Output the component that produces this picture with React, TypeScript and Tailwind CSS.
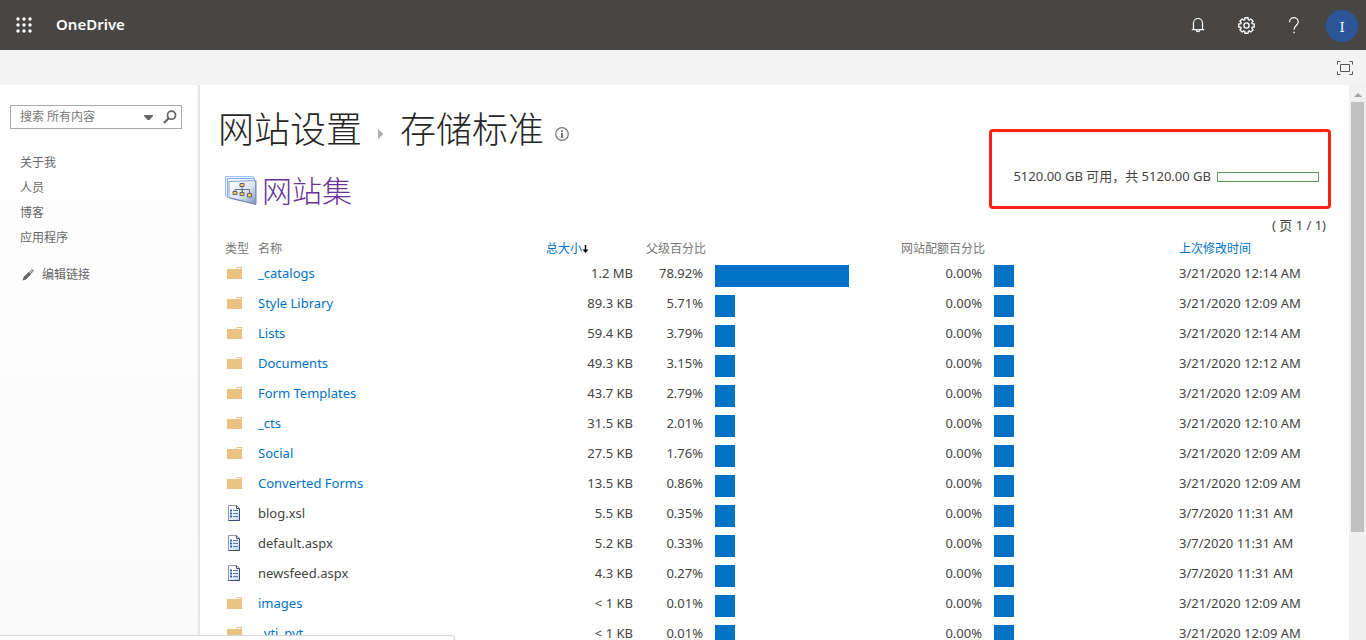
import React from 'react';

type Row = {
  kind: 'folder' | 'file';
  name: string;
  size: string;
  parent: number;
  modified: string;
};

const rows: Row[] = [
  { kind: 'folder', name: '_catalogs', size: '1.2 MB', parent: 78.92, modified: '3/21/2020 12:14 AM' },
  { kind: 'folder', name: 'Style Library', size: '89.3 KB', parent: 5.71, modified: '3/21/2020 12:09 AM' },
  { kind: 'folder', name: 'Lists', size: '59.4 KB', parent: 3.79, modified: '3/21/2020 12:14 AM' },
  { kind: 'folder', name: 'Documents', size: '49.3 KB', parent: 3.15, modified: '3/21/2020 12:12 AM' },
  { kind: 'folder', name: 'Form Templates', size: '43.7 KB', parent: 2.79, modified: '3/21/2020 12:09 AM' },
  { kind: 'folder', name: '_cts', size: '31.5 KB', parent: 2.01, modified: '3/21/2020 12:10 AM' },
  { kind: 'folder', name: 'Social', size: '27.5 KB', parent: 1.76, modified: '3/21/2020 12:09 AM' },
  { kind: 'folder', name: 'Converted Forms', size: '13.5 KB', parent: 0.86, modified: '3/21/2020 12:09 AM' },
  { kind: 'file', name: 'blog.xsl', size: '5.5 KB', parent: 0.35, modified: '3/7/2020 11:31 AM' },
  { kind: 'file', name: 'default.aspx', size: '5.2 KB', parent: 0.33, modified: '3/7/2020 11:31 AM' },
  { kind: 'file', name: 'newsfeed.aspx', size: '4.3 KB', parent: 0.27, modified: '3/7/2020 11:31 AM' },
  { kind: 'folder', name: 'images', size: '< 1 KB', parent: 0.01, modified: '3/21/2020 12:09 AM' },
  { kind: 'folder', name: '_vti_pvt', size: '< 1 KB', parent: 0.01, modified: '3/21/2020 12:09 AM' },
];

const navLinks = ['关于我', '人员', '博客', '应用程序'];

function WaffleIcon() {
  return (
    <svg width="16" height="16" viewBox="0 0 16 16" fill="#fff" aria-hidden="true">
      {[2, 8, 14].map((y) => [2, 8, 14].map((x) => <circle key={`${x}-${y}`} cx={x} cy={y} r="1.7" />))}
    </svg>
  );
}

function BellIcon() {
  return (
    <svg width="14" height="16" viewBox="0 0 14 16" fill="none" stroke="#fff" strokeWidth="1.2" aria-hidden="true">
      <path d="M2.5 12.5V6a4.5 4.5 0 0 1 9 0v6.5M.8 12.6h12.4M5.3 13a1.7 1.7 0 0 0 3.4 0" />
    </svg>
  );
}

function GearIcon() {
  const teeth = [0, 45, 90, 135, 180, 225, 270, 315];
  const points = teeth
    .map((a) =>
      [
        [-17, 6],
        [-12, 7.9],
        [12, 7.9],
        [17, 6],
      ]
        .map(([d, r]) => {
          const t = ((a + d) * Math.PI) / 180;
          return `${(8.5 + r * Math.cos(t)).toFixed(2)},${(8.5 + r * Math.sin(t)).toFixed(2)}`;
        })
        .join(' '),
    )
    .join(' ');
  return (
    <svg width="17" height="17" viewBox="0 0 17 17" fill="none" stroke="#fff" strokeWidth="1.3" strokeLinejoin="round" aria-hidden="true">
      <polygon points={points} />
      <circle cx="8.5" cy="8.5" r="2.6" />
    </svg>
  );
}

function HelpIcon() {
  return (
    <svg width="12" height="17" viewBox="0 0 12 17" fill="none" stroke="#fff" strokeWidth="1.2" aria-hidden="true">
      <path d="M1.6 5.2V5a4.3 4.3 0 0 1 8.6 0c0 1.8-1 2.7-2.2 3.8C6.8 9.9 6 10.7 6 12.8" />
      <path d="M5.3 15.5h1.4" strokeWidth="1.5" />
    </svg>
  );
}

function FocusIcon() {
  return (
    <svg width="16" height="14" viewBox="0 0 16 14" fill="none" stroke="#555" aria-hidden="true">
      <path d="M.5 3.5v-3h3M12.5.5h3v3M15.5 10.5v3h-3M3.5 13.5h-3v-3M3.5 3.5h9v7h-9z" />
    </svg>
  );
}

function SearchIcon() {
  return (
    <svg width="14" height="14" viewBox="0 0 14 14" fill="none" stroke="#666" aria-hidden="true">
      <circle cx="8.5" cy="5.2" r="4" strokeWidth="1.8" />
      <path d="M5.6 8.3 1 13" strokeWidth="2.2" />
    </svg>
  );
}

function PencilIcon() {
  return (
    <svg width="12" height="12" viewBox="0 0 12 12" fill="#666" aria-hidden="true">
      <path d="M.5 11.5 1.6 8 7 2.7l2.3 2.3L4 10.4zM7.6 2.1l.7-.7 2.3 2.3-.7.7zM8.9 1C9.6.2 10.3.1 11 .9c.8.7.7 1.5 0 2.2z" />
    </svg>
  );
}

function InfoIcon() {
  return (
    <svg width="14" height="14" viewBox="0 0 14 14" fill="none" aria-hidden="true">
      <circle cx="7" cy="7" r="6.3" stroke="#777" strokeWidth="1.2" />
      <path d="M7 6v4.600M7 3.200v1.700" stroke="#666" strokeWidth="1.800" />
      <path d="M5.800 6.300h1M5.500 10.300h3" stroke="#777" strokeWidth=".8" />
    </svg>
  );
}

function SiteCollectionIcon() {
  return (
    <svg width="32" height="31" viewBox="0 0 32 31" aria-hidden="true">
      <defs>
        <linearGradient id="pane" x1="0" y1="0" x2="1" y2="1">
          <stop offset="0" stopColor="#fff" />
          <stop offset=".55" stopColor="#dce4f0" />
          <stop offset="1" stopColor="#7f93bb" />
        </linearGradient>
      </defs>
      <path d="M.5 1.5h28v20L.5 21z" fill="#e9f3ff" stroke="#9fc3f2" />
      <path d="M2.5 3.5h27v20l-27-1z" fill="#f3f8ff" stroke="#86adec" />
      <path d="M4 6.5 30.5 5.5v23.5L4 22.5z" fill="url(#pane)" stroke="#8aa2d0" />
      <path d="M31 5.5V29.5L5 23.2" fill="none" stroke="#7688ad" />
      <path d="M17 11.5v5M10 18.5v-4h14.5v5M17.5 15v4" fill="none" stroke="#6b7280" />
      <g fill="#ffc75a" stroke="#5d6470">
        <path d="M15 8.5h4v3h-4zM8 16.5h4v3H8zM15 17.5h4v3h-4zM22.5 18.5h4v3.500h-4z" />
      </g>
    </svg>
  );
}

function FolderIcon() {
  return (
    <svg width="16" height="14" viewBox="0 0 16 14" aria-hidden="true">
      <path d="M0 3h8.500L10 1h5v12H0z" fill="#eac282" />
      <path d="M9.500 2.500H14" stroke="#fff" />
    </svg>
  );
}

function FileIcon() {
  return (
    <svg width="14" height="16" viewBox="0 0 14 16" aria-hidden="true">
      <defs>
        <linearGradient id="sheet" x1="0" y1="0" x2="1" y2="1">
          <stop offset=".3" stopColor="#fff" />
          <stop offset="1" stopColor="#b9cdf5" />
        </linearGradient>
      </defs>
      <path d="M1.500.5h8l3 3v12h-11z" fill="url(#sheet)" stroke="#8b95aa" />
      <path d="M9.500.5v3h3v12h-11" fill="none" stroke="#3a4f78" />
      <path d="M3 5.500h2M3 8.500h2M3 11.500h2" stroke="#2467d1" strokeWidth="1.800" />
      <path d="M6 5.500h5M6 8.500h5M6 11.500h5" stroke="#65779e" />
    </svg>
  );
}

function SortArrow() {
  return (
    <svg width="7" height="10" viewBox="0 0 7 10" aria-hidden="true">
      <path d="M3.500 1v6" stroke="#000" strokeWidth="1.400" />
      <path d="M.5 5.500h6l-3 3.500z" fill="#000" />
    </svg>
  );
}

function Bar({ percent }: { percent: number }) {
  return <div className="h-[22px] bg-[#0072c6]" style={{ width: Math.max(20, Math.round(percent * 1.7)) }} />;
}

export default function App() {
  return (
    <div className="relative flex h-screen flex-col overflow-hidden bg-white font-['Noto_Sans','Noto_Sans_CJK_SC',sans-serif] text-[13px] text-[#444]">
      <header className="flex h-[50px] shrink-0 items-center bg-[#484644] pr-2 text-white">
        <button aria-label="应用启动器" className="flex h-full w-12 items-center justify-center">
          <WaffleIcon />
        </button>
        <a href="#" className="ml-2 pb-[2px] text-[15px] font-semibold">OneDrive</a>
        <div className="ml-auto flex h-full items-center">
          <button aria-label="通知" className="flex h-full w-12 items-center justify-center"><BellIcon /></button>
          <button aria-label="设置" className="flex h-full w-12 items-center justify-center"><GearIcon /></button>
          <button aria-label="帮助" className="flex h-full w-12 items-center justify-center"><HelpIcon /></button>
          <button aria-label="帐户" className="mt-[2px] ml-2 flex size-8 items-center justify-center rounded-full bg-[#2b579a] text-[14px]">I</button>
        </div>
      </header>

      <div className="flex h-[35px] shrink-0 items-center justify-end bg-[#f3f3f3] pr-[13px]">
        <button aria-label="聚焦内容"><FocusIcon /></button>
      </div>

      <div className="flex min-h-0 flex-1">
        <aside className="flex w-[197px] shrink-0 flex-col bg-linear-to-b from-white to-[#fafafa] pt-5 text-[12px] text-[#666]">
          <form className="mr-[15px] ml-[10px] flex h-6 items-center border border-[#ababab] bg-white pr-1" onSubmit={(e) => e.preventDefault()}>
            <input
              type="text"
              aria-label="搜索"
              placeholder="搜索 所有内容"
              className="min-w-0 flex-1 pl-[9px] outline-none placeholder:text-[#777]"
            />
            <button type="button" aria-label="搜索范围" className="mr-[10px]">
              <svg width="9" height="5" viewBox="0 0 9 5" aria-hidden="true"><path d="M0 0h9v1L5.500 5h-2L0 1z" fill="#666" /></svg>
            </button>
            <button type="submit" aria-label="开始搜索"><SearchIcon /></button>
          </form>
          <nav className="mt-[21px] flex flex-col pl-5">
            {navLinks.map((label) => (
              <a key={label} href="#" className="h-[25px] leading-[25px]">{label}</a>
            ))}
            <a href="#" className="mt-3 flex h-[25px] items-center gap-2 pl-[2px]">
              <PencilIcon />
              编辑链接
            </a>
          </nav>
        </aside>
        <div className="w-[3px] shrink-0 bg-linear-to-r from-[#f8f8f8] to-[#dedede]" />

        <main className="min-w-0 flex-1 overflow-hidden pt-5 pr-[18px] pl-[18px]">
          <div className="flex items-start justify-between">
            <div>
              <h1 className="flex h-[50px] items-center text-[36px] font-light text-[#262626]">
                <a href="#">网站设置</a>
                <svg className="mt-2 mr-4 ml-4" width="6" height="10" viewBox="0 0 6 10" aria-hidden="true"><path d="M0 0l5.500 5L0 10z" fill="#aaa" /></svg>
                <span>存储标准</span>
                <button aria-label="说明" className="mt-2 ml-[11px]"><InfoIcon /></button>
              </h1>
              <h2 className="mt-[14px] flex h-[42px] items-center gap-[5px] pl-[7px] text-[30px] font-light text-[#663399]">
                <SiteCollectionIcon />
                <a href="#">网站集</a>
              </h2>
            </div>
            <div className="mt-6 flex h-20 w-[342px] items-center justify-end gap-[6px] rounded-[4px] border-3 border-[#ff2116] pt-4 pr-[9px] whitespace-nowrap">
              <span>5120.00 GB 可用，共 5120.00 GB</span>
              <div className="h-[10px] w-[102px] border border-[#5b9a5b]" />
            </div>
          </div>
          <p className="mt-1 h-5 pr-[5px] text-right leading-5">( 页 1 / 1)</p>

          <div className="mt-1 pl-[7px]">
            <table className="w-full table-fixed border-collapse whitespace-nowrap">
              <colgroup>
                <col className="w-[33px]" />
                <col />
                <col className="w-[90px]" />
                <col className="w-[70px]" />
                <col className="w-[195px]" />
                <col className="w-[84px]" />
                <col className="w-[194px]" />
                <col className="w-[152px]" />
              </colgroup>
              <thead>
                <tr className="h-[19px] text-left text-[12px] leading-[18px] text-[#777]">
                  <th className="p-0 font-normal">类型</th>
                  <th className="p-0 font-normal">名称</th>
                  <th className="p-0 font-normal">
                    <a href="#" className="flex items-center text-[#0072c6]">总大小<SortArrow /></a>
                  </th>
                  <th className="p-0 text-right font-normal">父级百分比</th>
                  <td className="p-0" />
                  <th className="p-0 text-right font-normal">网站配额百分比</th>
                  <td className="p-0" />
                  <th className="p-0 font-normal"><a href="#" className="text-[#0072c6]">上次修改时间</a></th>
                </tr>
              </thead>
              <tbody>
                {rows.map((row) => (
                  <tr key={row.name} className="h-[30px] leading-5">
                    <td className="p-0 pl-[2px]">{row.kind === 'folder' ? <FolderIcon /> : <FileIcon />}</td>
                    <td className="p-0">
                      {row.kind === 'folder' ? <a href="#" className="text-[#0072c6]">{row.name}</a> : row.name}
                    </td>
                    <td className="p-0 pr-[3px] text-right">{row.size}</td>
                    <td className="p-0 pr-[3px] text-right">{row.parent.toFixed(2)}%</td>
                    <td className="p-0 pt-[6px] pl-[9px]"><Bar percent={row.parent} /></td>
                    <td className="p-0 pr-[3px] text-right">0.00%</td>
                    <td className="p-0 pt-[6px] pl-[9px]"><Bar percent={0} /></td>
                    <td className="p-0">{row.modified}</td>
                  </tr>
                ))}
              </tbody>
            </table>
          </div>
        </main>

        <div className="flex w-[17px] shrink-0 flex-col items-center bg-[#f0f0f0]" aria-hidden="true">
          <div className="flex h-[17px] items-center">
            <svg className="mt-[2px]" width="8" height="4" viewBox="0 0 8 4"><path d="M4 0l4 4H0z" fill="#a3a3a3" /></svg>
          </div>
          <div className="h-[80%] max-h-[430px] w-[13px] bg-[#c1c1c1]" />
        </div>
      </div>

      <div className="absolute bottom-0 left-0 h-[5px] w-1/3 rounded-tr-[4px] border-t border-r border-[#d8d8d8] bg-white" />
    </div>
  );
}
